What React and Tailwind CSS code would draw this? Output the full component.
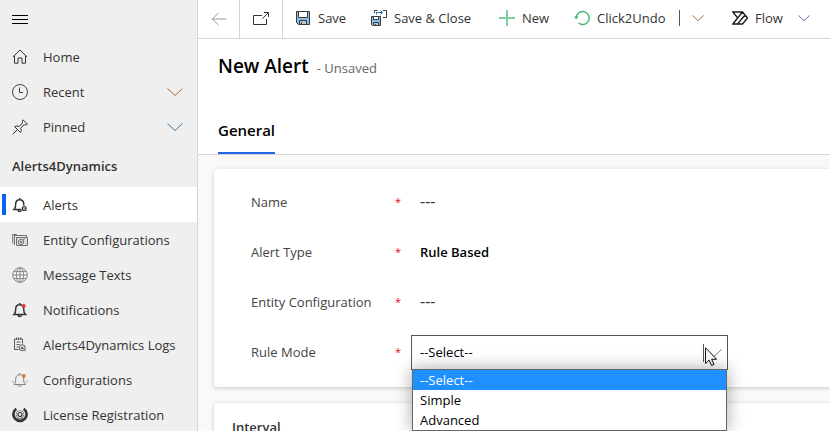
import React from "react";

const Icon = ({ children, className = "size-4", box = "0 0 16 16" }) => (
  <svg viewBox={box} className={className + " shrink-0"} fill="none" stroke="currentColor" aria-hidden="true">
    {children}
  </svg>
);

const Chevron = ({ className }) => (
  <Icon className={className} box="0 0 16 8">
    <path d="M.5.5 8 7.5 15.5.5" vectorEffect="non-scaling-stroke" />
  </Icon>
);

const HomeIcon = () => (
  <Icon>
    <path d="M.8 8 8 1l7.200 7M2.500 6.500v7.700h3.500V9h4v5.200h3.500V6.500" />
  </Icon>
);
const ClockIcon = () => (
  <Icon className="size-4 text-[#444]">
    <circle cx="8" cy="8" r="7.500" />
    <path d="M7.500 3.500v5h3.500" />
  </Icon>
);
const PinIcon = () => (
  <Icon>
    <path d="M.7 15.300 5.500 10.500M2.500 7.500l6 6M2.700 7.700c1.500-1 3-1 4.300 0l3.500-3.700c-.5-1.200-.2-2.200.5-3.200l4.400 4.400c-1 .8-2 1-3.200.5L8.500 9.200c1 1.300 1 2.800 0 4.300" />
  </Icon>
);
const bell = "M2 12.500c1.500-1.300 1.700-2.500 1.700-5.500 0-2.600 1.300-4.300 4-4.300s4 1.700 4 4.300c0 3 .3 4.200 1.800 5.500zM7.700 2.700V1M6 13c.2 2 3.200 2 3.500 0";
const AlertIcon = () => (
  <Icon>
    <path d={bell} strokeWidth="1.500" />
    <circle cx="12.200" cy="11.500" r="3" fill="#fff" stroke="none" />
    <circle cx="12.200" cy="11.500" r="1.900" strokeWidth="1.300" />
    <circle cx="12.200" cy="11.500" r=".6" fill="currentColor" stroke="none" />
  </Icon>
);
const EntityIcon = () => (
  <Icon className="size-4 text-[#707070]">
    <path d="M.7 2v9.500M.7 2.500h4M2.500 2.500v10.500M2.500 3.500h12v10" />
    <path d="M4.500 5.500h11v8h-11z" fill="#ddd" />
    <circle cx="9" cy="10" r="2.600" />
    <circle cx="9" cy="10" r=".8" />
    <path d="m11 8 2-1.500" />
  </Icon>
);
const GlobeIcon = () => (
  <Icon className="size-4 text-[#8a8a8a]">
    <circle cx="8" cy="8" r="7.300" />
    <ellipse cx="8" cy="8" rx="3.700" ry="7.300" />
    <path d="M8 .7v14.600M.7 8h14.600M2 4.500h12M2 11.500h12" />
  </Icon>
);
const NotifyIcon = () => (
  <Icon>
    <path d={bell} strokeWidth="1.500" />
    <circle cx="11.700" cy="4" r="2" fill="#e0393e" stroke="none" />
  </Icon>
);
const LogsIcon = () => (
  <Icon className="size-4 text-[#555]">
    <path d="M2.500 2v10.500h4M2.500 2h8v4.500M4.500 .5v2M6.500 .5v2M8.500 .5v2M4.500 5h4M4.500 7.500h3M4.500 10h2" />
    <circle cx="10.200" cy="10.700" r="3" />
    <path d="m9 11.500 1.200-1.800 1.300 1.800zM12.300 12.800l1.700 1.200" />
  </Icon>
);
const ConfigIcon = () => (
  <Icon className="size-4 text-[#858585]">
    <path d={bell} />
    <circle cx="11.800" cy="4" r="1.900" fill="#dd7d37" stroke="none" />
    <path d="M.7 8.500v1.500l1.500 1M15.300 8.500v1.500l-1.500 1" stroke="#dda06f" />
  </Icon>
);
const LicenseIcon = () => (
  <Icon>
    <path d="M4.300 1.800a6.600 6.600 0 1 0 7.400 0" strokeWidth="2.600" />
    <circle cx="8" cy="7.500" r="3.900" stroke="#888" />
    <circle cx="8" cy="7.500" r="2" strokeWidth="1.200" />
    <path d="M5 11.500h6" stroke="#888" />
  </Icon>
);

const SaveIcon = () => (
  <Icon className="size-4">
    <path d="M1.500 1.500h13v13h-11l-2-2z" fill="#83beec" stroke="#3b3a39" />
    <path d="M3.500 1.500h9v6h-9z" fill="#fff" stroke="#3b3a39" />
    <path d="M4.500 14.500v-4h7v4z" fill="#c8c6c4" stroke="#3b3a39" />
    <path d="M6.500 12v2.500" stroke="#3b3a39" />
  </Icon>
);
const SaveCloseIcon = () => (
  <Icon className="size-4">
    <path d="M3.500 3V.5h3M12 .5h3.500v7H12" stroke="#3b3a39" />
    <path d="M5.500 4.500v-2h6M9.500.5l2 2-2 2" stroke="#1e72b8" />
    <path d="M.5 6.500h9v9h-8l-1-1z" fill="#83beec" stroke="#3b3a39" />
    <path d="M2.500 6.500h5v3h-5z" fill="#fff" stroke="#3b3a39" />
    <path d="M2.500 15.500v-3h5v3z" fill="#c8c6c4" stroke="#3b3a39" />
    <path d="M4.500 14v1.500" stroke="#3b3a39" />
  </Icon>
);
const PlusIcon = () => (
  <Icon className="size-4 text-[#7fcf9f]">
    <path d="M8 0v16M0 8h16" strokeWidth="2" />
  </Icon>
);
const UndoIcon = () => (
  <Icon className="size-4 text-[#3db565]">
    <path d="M2.200 8.500A6.500 6.500 0 1 1 4.500 13" strokeWidth="1.400" />
    <path d="M0 6.500h4.500L2.200 9.200z" fill="currentColor" stroke="none" />
  </Icon>
);
const FlowIcon = () => (
  <Icon className="size-4 text-[#1b1a19]">
    <path d="M.8 2h9.700l5 6-5 6H.8l5-6zM10.500 2 .8 14M13 5l-7.500 9" strokeWidth="1.300" />
  </Icon>
);

const modules = [
  ["Alerts", AlertIcon],
  ["Entity Configurations", EntityIcon],
  ["Message Texts", GlobeIcon],
  ["Notifications", NotifyIcon],
  ["Alerts4Dynamics Logs", LogsIcon],
  ["Configurations", ConfigIcon],
  ["License Registration", LicenseIcon],
];

function NavLink({ label, Glyph, active, chevron }) {
  return (
    <a
      href="#"
      aria-current={active ? "page" : undefined}
      className={"flex h-[35px] items-center pr-3.5 " + (active ? "bg-white" : "")}
    >
      <span className={"mr-1.5 ml-0.5 h-[21px] w-1 " + (active ? "bg-[#0b62f5]" : "")} />
      <Glyph />
      <span className="ml-[15px] grow whitespace-nowrap">{label}</span>
      {chevron && <Chevron className={"h-2 w-4 " + chevron} />}
    </a>
  );
}

function Command({ label, Glyph, className = "" }) {
  return (
    <button type="button" className={"flex shrink-0 items-center gap-[7px] whitespace-nowrap " + className}>
      <Glyph />
      {label}
    </button>
  );
}

function Field({ label, id, children }) {
  return (
    <div className="flex h-[50px] items-center">
      <label htmlFor={id} className="flex w-[160px] shrink-0 justify-between pr-2.5 text-[#444]">
        {label}
        <span className="text-[11px] text-[#e00b1c]">*</span>
      </label>
      {children}
    </div>
  );
}

const inputClass = "h-[35px] w-[317px] bg-transparent pl-[9px] text-black placeholder:text-base placeholder:text-[#333] placeholder:opacity-100 outline-none";

export default function App() {
  return (
    <div className="flex h-screen overflow-hidden bg-[#faf9f8] font-['Open_Sans','Noto_Sans',sans-serif] text-[13px] leading-5 text-[#333]">
      <nav className="w-[198px] shrink-0 border-r border-[#d6d6d6] bg-[#efefef]">
        <button type="button" aria-label="Site map" className="flex h-[39px] items-center pl-3 text-black">
          <Icon>
            <path d="M0 3.500h16M0 7.500h16M0 11.500h16" />
          </Icon>
        </button>
        <NavLink label="Home" Glyph={HomeIcon} />
        <NavLink label="Recent" Glyph={ClockIcon} chevron="text-[#a06c32]" />
        <NavLink label="Pinned" Glyph={PinIcon} chevron="text-[#3c78a8]" />
        <h2 className="flex h-[43px] items-center pl-3 font-semibold">Alerts4Dynamics</h2>
        {modules.map(([label, Glyph], i) => (
          <NavLink key={label} label={label} Glyph={Glyph} active={i === 0} />
        ))}
      </nav>

      <main className="min-w-0 grow">
        <div className="flex h-[39px] border-b border-[#d6d6d6] bg-white pb-0.5">
          <button type="button" aria-label="Back" className="-mb-0.5 flex w-[42px] shrink-0 items-center justify-center border-r border-[#d6d6d6] text-[#999]">
            <Icon>
              <path d="M1 8h14.500M7.500 2 1.200 8l6.300 6" />
            </Icon>
          </button>
          <button type="button" aria-label="Open in new window" className="-mb-0.5 flex w-[43px] shrink-0 items-center justify-center border-r border-[#d6d6d6]">
            <Icon>
              <path d="M9 4.500H.5v9h13V8M9.500 7.500 15 2M11 1.500h4.500V6" />
            </Icon>
          </button>
          <Command label="Save" Glyph={SaveIcon} className="ml-3 w-[76px]" />
          <Command label="Save & Close" Glyph={SaveCloseIcon} className="w-[128px]" />
          <Command label="New" Glyph={PlusIcon} className="w-[75px]" />
          <Command label="Click2Undo" Glyph={UndoIcon} className="w-[105px]" />
          <button type="button" aria-label="More undo options" className="flex w-[53px] shrink-0 items-center gap-3">
            <span className="h-4 w-px bg-[#555]" />
            <Chevron className="h-1.5 w-3 text-[#b06c50]" />
          </button>
          <Command label="Flow" Glyph={FlowIcon} className="w-[66px]" />
          <button type="button" aria-label="More flow options" className="flex shrink-0 items-center">
            <Chevron className="h-1.5 w-3 text-[#5e6ea8]" />
          </button>
        </div>

        <header className="flex h-[116px] flex-col justify-between border-b border-[#d6d6d6] bg-white px-5 pt-[13px]">
          <div className="flex items-baseline gap-2">
            <h1 className="text-[19px] leading-7 font-semibold text-black">New Alert</h1>
            <span className="text-[#666]">- Unsaved</span>
          </div>
          <div role="tablist" className="flex">
            <button type="button" role="tab" aria-selected="true" className="border-b-2 border-[#2266e3] pb-3 text-[15px] font-semibold text-black">
              General
            </button>
          </div>
        </header>

        <div className="flex flex-col gap-4 pt-3.5 pl-4">
          <section className="rounded-l bg-white pt-2 pb-2.5 pl-[37px] shadow-[0_1px_4px_rgba(0,0,0,0.2)]">
            <Field label="Name" id="name">
              <input id="name" placeholder="---" className={inputClass} />
            </Field>
            <Field label="Alert Type" id="type">
              <input id="type" defaultValue="Rule Based" className={inputClass + " font-semibold"} />
            </Field>
            <Field label="Entity Configuration" id="entity">
              <input id="entity" placeholder="---" className={inputClass} />
            </Field>
            <Field label="Rule Mode" id="mode">
              <div className="relative w-[317px]">
                <select id="mode" className="block h-[35px] w-full appearance-none border border-[#555] bg-white pl-2 text-black outline-none">
                  <option>--Select--</option>
                  <option>Simple</option>
                  <option>Advanced</option>
                </select>
                <div className="pointer-events-none absolute top-[9px] right-1.5 flex items-center gap-0.5">
                  <span className="h-[18px] w-px bg-[#555]" />
                  <Chevron className="h-2 w-4 text-[#777]" />
                </div>
                <svg viewBox="0 0 12 19" className="pointer-events-none absolute top-3 right-[11px] h-[19px] w-3" aria-hidden="true">
                  <path d="M.5.700v15.800l3.600-3.400 2.500 5.400 2.400-1.100-2.400-5.100h5z" fill="#fff" stroke="#111" />
                </svg>
                <ul role="listbox" aria-label="Rule Mode" className="absolute top-[34px] right-px left-px z-10 border border-[#666] bg-white text-black shadow-[0_0_16px_rgba(0,0,0,0.35)]">
                  <li role="option" aria-selected="true" className="bg-[#1e90ff] pl-[7px] text-white">--Select--</li>
                  <li role="option" aria-selected="false" className="pl-[7px]">Simple</li>
                  <li role="option" aria-selected="false" className="pl-[7px]">Advanced</li>
                </ul>
              </div>
            </Field>
          </section>
          <section className="rounded-l bg-white px-[18px] py-3.5 shadow-[0_1px_4px_rgba(0,0,0,0.2)]">
            <h2 className="font-semibold">Interval</h2>
          </section>
        </div>
      </main>
    </div>
  );
}
